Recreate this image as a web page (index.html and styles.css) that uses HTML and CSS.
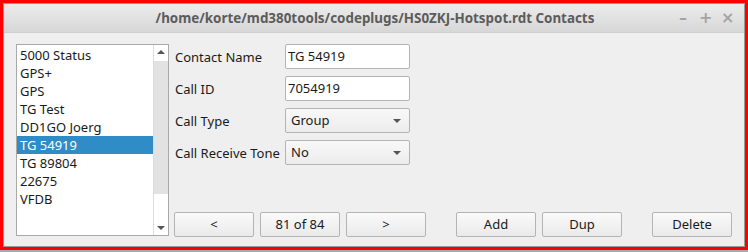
FILE: index.html
```html
<html>
<head>
	<meta charset="utf-8">
	<title>Contacts</title>
	<link rel="stylesheet" href="styles.css">
</head>
<body>
	<div class="frame">
		<div class="window">
			<div class="titleBar">
				<span class="title">/home/korte/md380tools/codeplugs/HS0ZKJ-Hotspot.rdt Contacts</span>
				<div class="winBtns">
					<span class="winBtn">&#8211;</span>
					<span class="winBtn">+</span>
					<span class="winBtn">&#215;</span>
				</div>
			</div>
			<div class="content">
				<div class="listBox">
					<ul class="items">
						<li>5000 Status</li>
						<li>GPS+</li>
						<li>GPS</li>
						<li>TG Test</li>
						<li>DD1GO Joerg</li>
						<li class="current">TG 54919</li>
						<li>TG 89804</li>
						<li>22675</li>
						<li>VFDB</li>
					</ul>
					<div class="scrollBar">
						<div class="arrow up"></div>
						<div class="handle"></div>
						<div class="track"></div>
						<div class="arrow down"></div>
					</div>
				</div>
				<div class="editor">
					<div class="fields">
						<label>Contact Name</label>
						<div class="input">TG 54919</div>
						<label>Call ID</label>
						<div class="input">7054919</div>
						<label>Call Type</label>
						<div class="combo">Group</div>
						<label>Call Receive Tone</label>
						<div class="combo">No</div>
					</div>
					<div class="buttons">
						<span class="btn">&lt;</span>
						<span class="btn">81 of 84</span>
						<span class="btn">&gt;</span>
						<span class="btn addBtn">Add</span>
						<span class="btn">Dup</span>
						<span class="btn delBtn">Delete</span>
					</div>
				</div>
			</div>
		</div>
	</div>
</body>
</html>
```

FILE: styles.css
```css
html, body, div, ul, li{
	padding: 0; margin: 0;
}
body{
	background: #a8a8a8;
	width: 748px;
	height: 252px;
	overflow: hidden;
	color: #1a1a1a;
	font: 13px/18px "Noto Sans", "Open Sans", sans-serif;
}
.frame{
	width: 742px;
	height: 244px;
	border: 3px solid #ff0000;
}
.window{
	height: 242px;
	border: 1px solid #9a9a9a;
	background: #efefef;
	display: flex;
	flex-direction: column;
}
.titleBar{
	height: 28px;
	background: linear-gradient(#ececec, #d7d7d7);
	border-bottom: 1px solid #cfcfcf;
	display: flex;
	align-items: center;
	justify-content: center;
	position: relative;
}
.title{
	font: bold 13.4px "Noto Sans", "Open Sans", sans-serif;
	color: #5c5c5c;
	margin-left: 2px;
}
.winBtns{
	position: absolute;
	right: 11px;
	top: 5px;
	display: flex;
	gap: 10px;
}
.winBtn{
	width: 12px;
	text-align: center;
	font: bold 16px/18px "DejaVu Sans", sans-serif;
	color: #a4a4a4;
}
.content{
	flex: 1;
	display: flex;
	padding: 11px 11px 8px 12px;
}
.listBox{
	width: 151px;
	height: 190px;
	border: 1px solid #a9a9a9;
	background: #fff;
	display: flex;
}
.items{
	flex: 1;
	list-style-type: none;
	padding-top: 1px;
}
.items li{
	height: 18px;
	padding-left: 3px;
	white-space: nowrap;
}
.items li.current{
	background: #308cc6;
	color: #fff;
}
.scrollBar{
	width: 14px;
	border-left: 1px solid #dcdcdc;
	display: flex;
	flex-direction: column;
}
.scrollBar .arrow{
	height: 16px;
	position: relative;
}
.scrollBar .arrow:after{
	content: "";
	position: absolute;
	left: 3px;
	border-left: 4px solid transparent;
	border-right: 4px solid transparent;
}
.scrollBar .up:after{
	top: 5px;
	border-bottom: 4px solid #555;
}
.scrollBar .down:after{
	top: 7px;
	border-top: 4px solid #555;
}
.scrollBar .handle{
	height: 133px;
	background: #e2e2e2;
}
.scrollBar .track{
	flex: 1;
}
.editor{
	flex: 1;
	margin-left: 5px;
	display: flex;
	flex-direction: column;
	justify-content: space-between;
}
.fields{
	display: grid;
	grid-template-columns: 111px 125px;
	grid-auto-rows: 25px;
	row-gap: 7px;
	align-items: center;
}
.fields label{
	padding-left: 1px;
}
.input, .combo{
	line-height: 23px;
	border: 1px solid #b4b4b4;
	border-radius: 2px;
	padding: 0 4px;
	box-sizing: border-box;
	height: 25px;
}
.input{
	background: #fff;
	padding-left: 2px;
}
.combo{
	background: linear-gradient(#f8f8f8, #ececec);
	position: relative;
	padding-left: 5px;
}
.combo:after{
	content: "";
	position: absolute;
	right: 8px;
	top: 10px;
	border-left: 4px solid transparent;
	border-right: 4px solid transparent;
	border-top: 4px solid #555;
}
.buttons{
	display: flex;
	gap: 6px;
	margin-bottom: 1px;
}
.btn{
	width: 78px;
	height: 23px;
	line-height: 23px;
	border: 1px solid #b4b4b4;
	border-radius: 2px;
	background: linear-gradient(#fafafa, #eaeaea);
	text-align: center;
}
.addBtn{
	margin-left: 24px;
}
.delBtn{
	margin-left: 24px;
}
```
